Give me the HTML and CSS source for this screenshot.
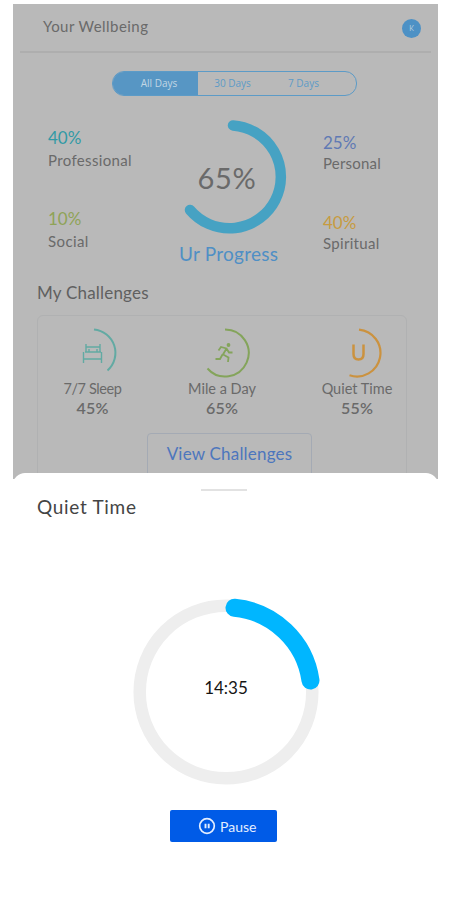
FILE: index.html
```
<!DOCTYPE html>
<html lang="en">
<head>
  <meta charset="UTF-8">
  <meta name="viewport" content="width=device-width, initial-scale=1.0">
  <title>Your Wellbeing</title>
  <link rel="stylesheet" href="styles.css">
</head>
<body>
  <div class="phone">
    <div class="dashboard">
      <header class="header">
        <span class="title">Your Wellbeing</span>
        <span class="avatar">K</span>
      </header>

      <div class="tabs">
        <span class="tab active">All Days</span>
        <span class="tab">30 Days</span>
        <span class="tab last">7 Days</span>
      </div>

      <div class="stats">
        <div class="column left">
          <div class="stat"><div class="teal">40%</div><div class="professional">Professional</div></div>
          <div class="stat"><div class="green">10%</div><div class="social">Social</div></div>
        </div>
        <div class="progress">
          <svg class="ring" width="116" height="116" viewBox="0 0 116 116">
            <path d="M62 6.4A51.5 51.5 0 1 1 19 91" fill="none" stroke="#46a2c3" stroke-width="10.5" stroke-linecap="round"/>
          </svg>
          <div class="percent">65%</div>
          <div class="progress-label">Ur Progress</div>
        </div>
        <div class="column right">
          <div class="stat"><div class="indigo">25%</div><div class="personal">Personal</div></div>
          <div class="stat"><div class="gold">40%</div><div class="spiritual">Spiritual</div></div>
        </div>
      </div>

      <h2 class="section-title">My Challenges</h2>
      <div class="challenges">
        <div class="challenge-row">
          <div class="challenge">
            <svg width="50" height="50" viewBox="0 0 50 50" fill="none" stroke="#62aaa3">
              <path d="M26 1.500A23.500 23.500 0 0 1 39.500 42.500" stroke-width="2"/>
              <path d="M18 16v8M32 16v8M18 19h14M17 24h16M21 21v3M29 21v3M15.500 24v11M33.500 24v11M15.500 31h18" stroke-width="1.400"/>
            </svg>
            <div class="name sleep">7/7 Sleep</div>
            <div class="value">45%</div>
          </div>
          <div class="challenge mile">
            <svg width="50" height="50" viewBox="0 0 50 50" fill="none" stroke="#84a45b">
              <path d="M25 1.5A23.500 23.500 0 1 1 7.500 40.500" stroke-width="2"/>
              <circle cx="28.500" cy="17" r="1.900" fill="#84a45b" stroke="none"/>
              <path d="M18.500 22.500l2.500-3.500 5.500 1.500-3.500 6 5.500 3-.5 4.500M26.500 20.500l2.500 4h3.500M22.500 26.500l-2.500 4.500h-4.500" stroke-width="1.800"/>
            </svg>
            <div class="name">Mile a Day</div>
            <div class="value">65%</div>
          </div>
          <div class="challenge quiet">
            <svg width="50" height="50" viewBox="0 0 50 50" fill="none" stroke="#cb923f">
              <path d="M27 1.600A23.500 23.500 0 1 1 17.500 47.300" stroke-width="2.200"/>
              <path d="M21.500 16.500v9.500q0 5.500 5 5.500t5-5.500v-9.500" stroke-width="2.500"/>
            </svg>
            <div class="name">Quiet Time</div>
            <div class="value">55%</div>
          </div>
        </div>
        <div class="view-button">View Challenges</div>
      </div>
    </div>

    <div class="sheet">
      <div class="handle"></div>
      <h1 class="sheet-title">Quiet Time</h1>
      <div class="timer">
        <svg class="timer-ring" width="188" height="188" viewBox="0 0 188 188" fill="none">
          <circle cx="94" cy="94" r="86.300" stroke="#eee" stroke-width="12.500"/>
          <path d="M102.500 9.800A85 85 0 0 1 178.500 82.500" stroke="#00b6ff" stroke-width="18" stroke-linecap="round"/>
        </svg>
        <div class="time">14:35</div>
      </div>
      <button class="pause">
        <svg width="18" height="18" viewBox="0 0 18 18" fill="none" stroke="#e4eeff">
          <circle cx="9" cy="9" r="7.300" stroke-width="1.700"/>
          <path d="M7.500 6.800v4.400M10.700 6.800v4.400" stroke-width="1.900"/>
        </svg>
        <span>Pause</span>
      </button>
    </div>
  </div>
</body>
</html>
```

FILE: styles.css
```
* {
  box-sizing: border-box;
}
body {
  margin: 0;
  padding: 4px 12px 0 13px;
  height: 900px;
  overflow: hidden;
  background: #fff;
  font-family: Lato, "Liberation Sans", sans-serif;
  color: #6a6a6a;
}
.dashboard {
  height: 475px;
  overflow: hidden;
  background: #b9b9b9;
}
.header {
  display: flex;
  justify-content: space-between;
  height: 49px;
  margin: 0 7px;
  padding: 12px 10px 0 23px;
  border-bottom: 2px solid #aeaeae;
}
.title {
  font-size: 15px;
  line-height: 20px;
  letter-spacing: 0.45px;
}
.avatar {
  width: 19px;
  height: 19px;
  margin-top: 3px;
  border-radius: 50%;
  background: #4d91c5;
  color: #b5cede;
  font-size: 7px;
  line-height: 19px;
  text-align: center;
}
.tabs {
  display: flex;
  width: 245px;
  height: 25px;
  margin: 18px 0 0 99px;
  border: 1.5px solid #5c9bc7;
  border-radius: 12px;
  overflow: hidden;
  font-family: "Open Sans", sans-serif;
  font-size: 10px;
  line-height: 23px;
  color: #5c9bc7;
}
.tab {
  width: 69px;
  text-align: center;
}
.tab.active {
  width: 85px;
  padding-left: 7px;
  background: #5796c4;
  color: #c2d6e4;
}
.tab.last {
  width: 73px;
}
.stats {
  display: flex;
  height: 172px;
  margin-top: 14px;
}
.column {
  width: 130px;
  padding: 16px 0 0 35px;
  font-size: 15px;
  line-height: 23px;
}
.column.right {
  width: 135px;
  padding: 22px 0 0 20px;
  line-height: 21px;
}
.left .stat {
  height: 81px;
}
.right .stat {
  height: 80px;
}
.professional {
  letter-spacing: 0.35px;
}
.social {
  letter-spacing: 0.4px;
}
.personal {
  letter-spacing: 0.2px;
}
.spiritual {
  letter-spacing: 0.3px;
}
.teal,
.green,
.indigo,
.gold {
  font-size: 17px;
}
.teal {
  color: #3299a5;
}
.green {
  color: #8fa357;
}
.indigo {
  color: #6079b4;
}
.gold {
  color: #c79b40;
}
.progress {
  position: relative;
  width: 160px;
  padding: 9px 0 0 28px;
}
.ring {
  display: block;
}
.percent {
  position: absolute;
  top: 50px;
  left: 13px;
  width: 142px;
  font-size: 29px;
  line-height: 36px;
  letter-spacing: 0.7px;
  text-align: center;
}
.progress-label {
  width: 140px;
  margin: 7px 0 0 -5px;
  padding-left: 13px;
  font-size: 19px;
  line-height: 24px;
  letter-spacing: 0.25px;
  white-space: nowrap;
  color: #4f8fc5;
}
.section-title {
  margin: 0 0 0 24px;
  font-size: 17px;
  font-weight: 400;
  line-height: 22px;
  letter-spacing: 0.2px;
  color: #606060;
}
.challenges {
  height: 180px;
  margin: 11px 31px 0 24px;
  border: 1px solid #b0b1b2;
  border-radius: 6px;
}
.challenge-row {
  display: flex;
  padding-top: 12px;
}
.challenge {
  flex: none;
  width: 109px;
  text-align: center;
}
.challenge.mile {
  width: 150px;
}
.challenge.quiet {
  width: 120px;
}
.challenge svg {
  display: block;
  margin: 0 auto;
}
.mile svg {
  margin-left: 53px;
}
.name {
  margin-top: 1px;
  font-size: 14.5px;
  line-height: 20px;
  white-space: nowrap;
}
.sleep {
  letter-spacing: -0.4px;
}
.value {
  font-size: 16px;
  font-weight: 600;
  line-height: 18px;
  letter-spacing: 0.2px;
}
.view-button {
  width: 165px;
  height: 50px;
  margin: 16px 0 0 109px;
  border: 1px solid #a4aab4;
  border-radius: 4px;
  font-size: 17px;
  line-height: 39px;
  letter-spacing: 0.2px;
  text-align: center;
  color: #4d76bd;
}
.sheet {
  position: relative;
  height: 427px;
  margin-top: -6px;
  padding: 16px 0 0;
  border-radius: 12px 12px 0 0;
  background: #fff;
}
.handle {
  width: 46px;
  height: 2px;
  margin: 0 0 0 188px;
  background: #e2e2e2;
}
.sheet-title {
  margin: 3px 0 0 24px;
  font-size: 19px;
  font-weight: 400;
  line-height: 26px;
  letter-spacing: 0.7px;
  color: #444;
}
.timer {
  position: relative;
  width: 188px;
  height: 188px;
  margin: 78px 0 0 119px;
}
.timer-ring {
  display: block;
}
.time {
  position: absolute;
  top: 78px;
  left: 0;
  width: 188px;
  font-size: 17px;
  line-height: 24px;
  text-align: center;
  color: #151515;
}
.pause {
  display: flex;
  align-items: center;
  width: 107px;
  height: 32px;
  margin: 24px 0 0 157px;
  padding: 0 0 0 28px;
  gap: 4px;
  border: none;
  border-radius: 2px;
  background: #005be7;
  color: #e4eeff;
  font-family: Lato, sans-serif;
  font-size: 14px;
}
```
